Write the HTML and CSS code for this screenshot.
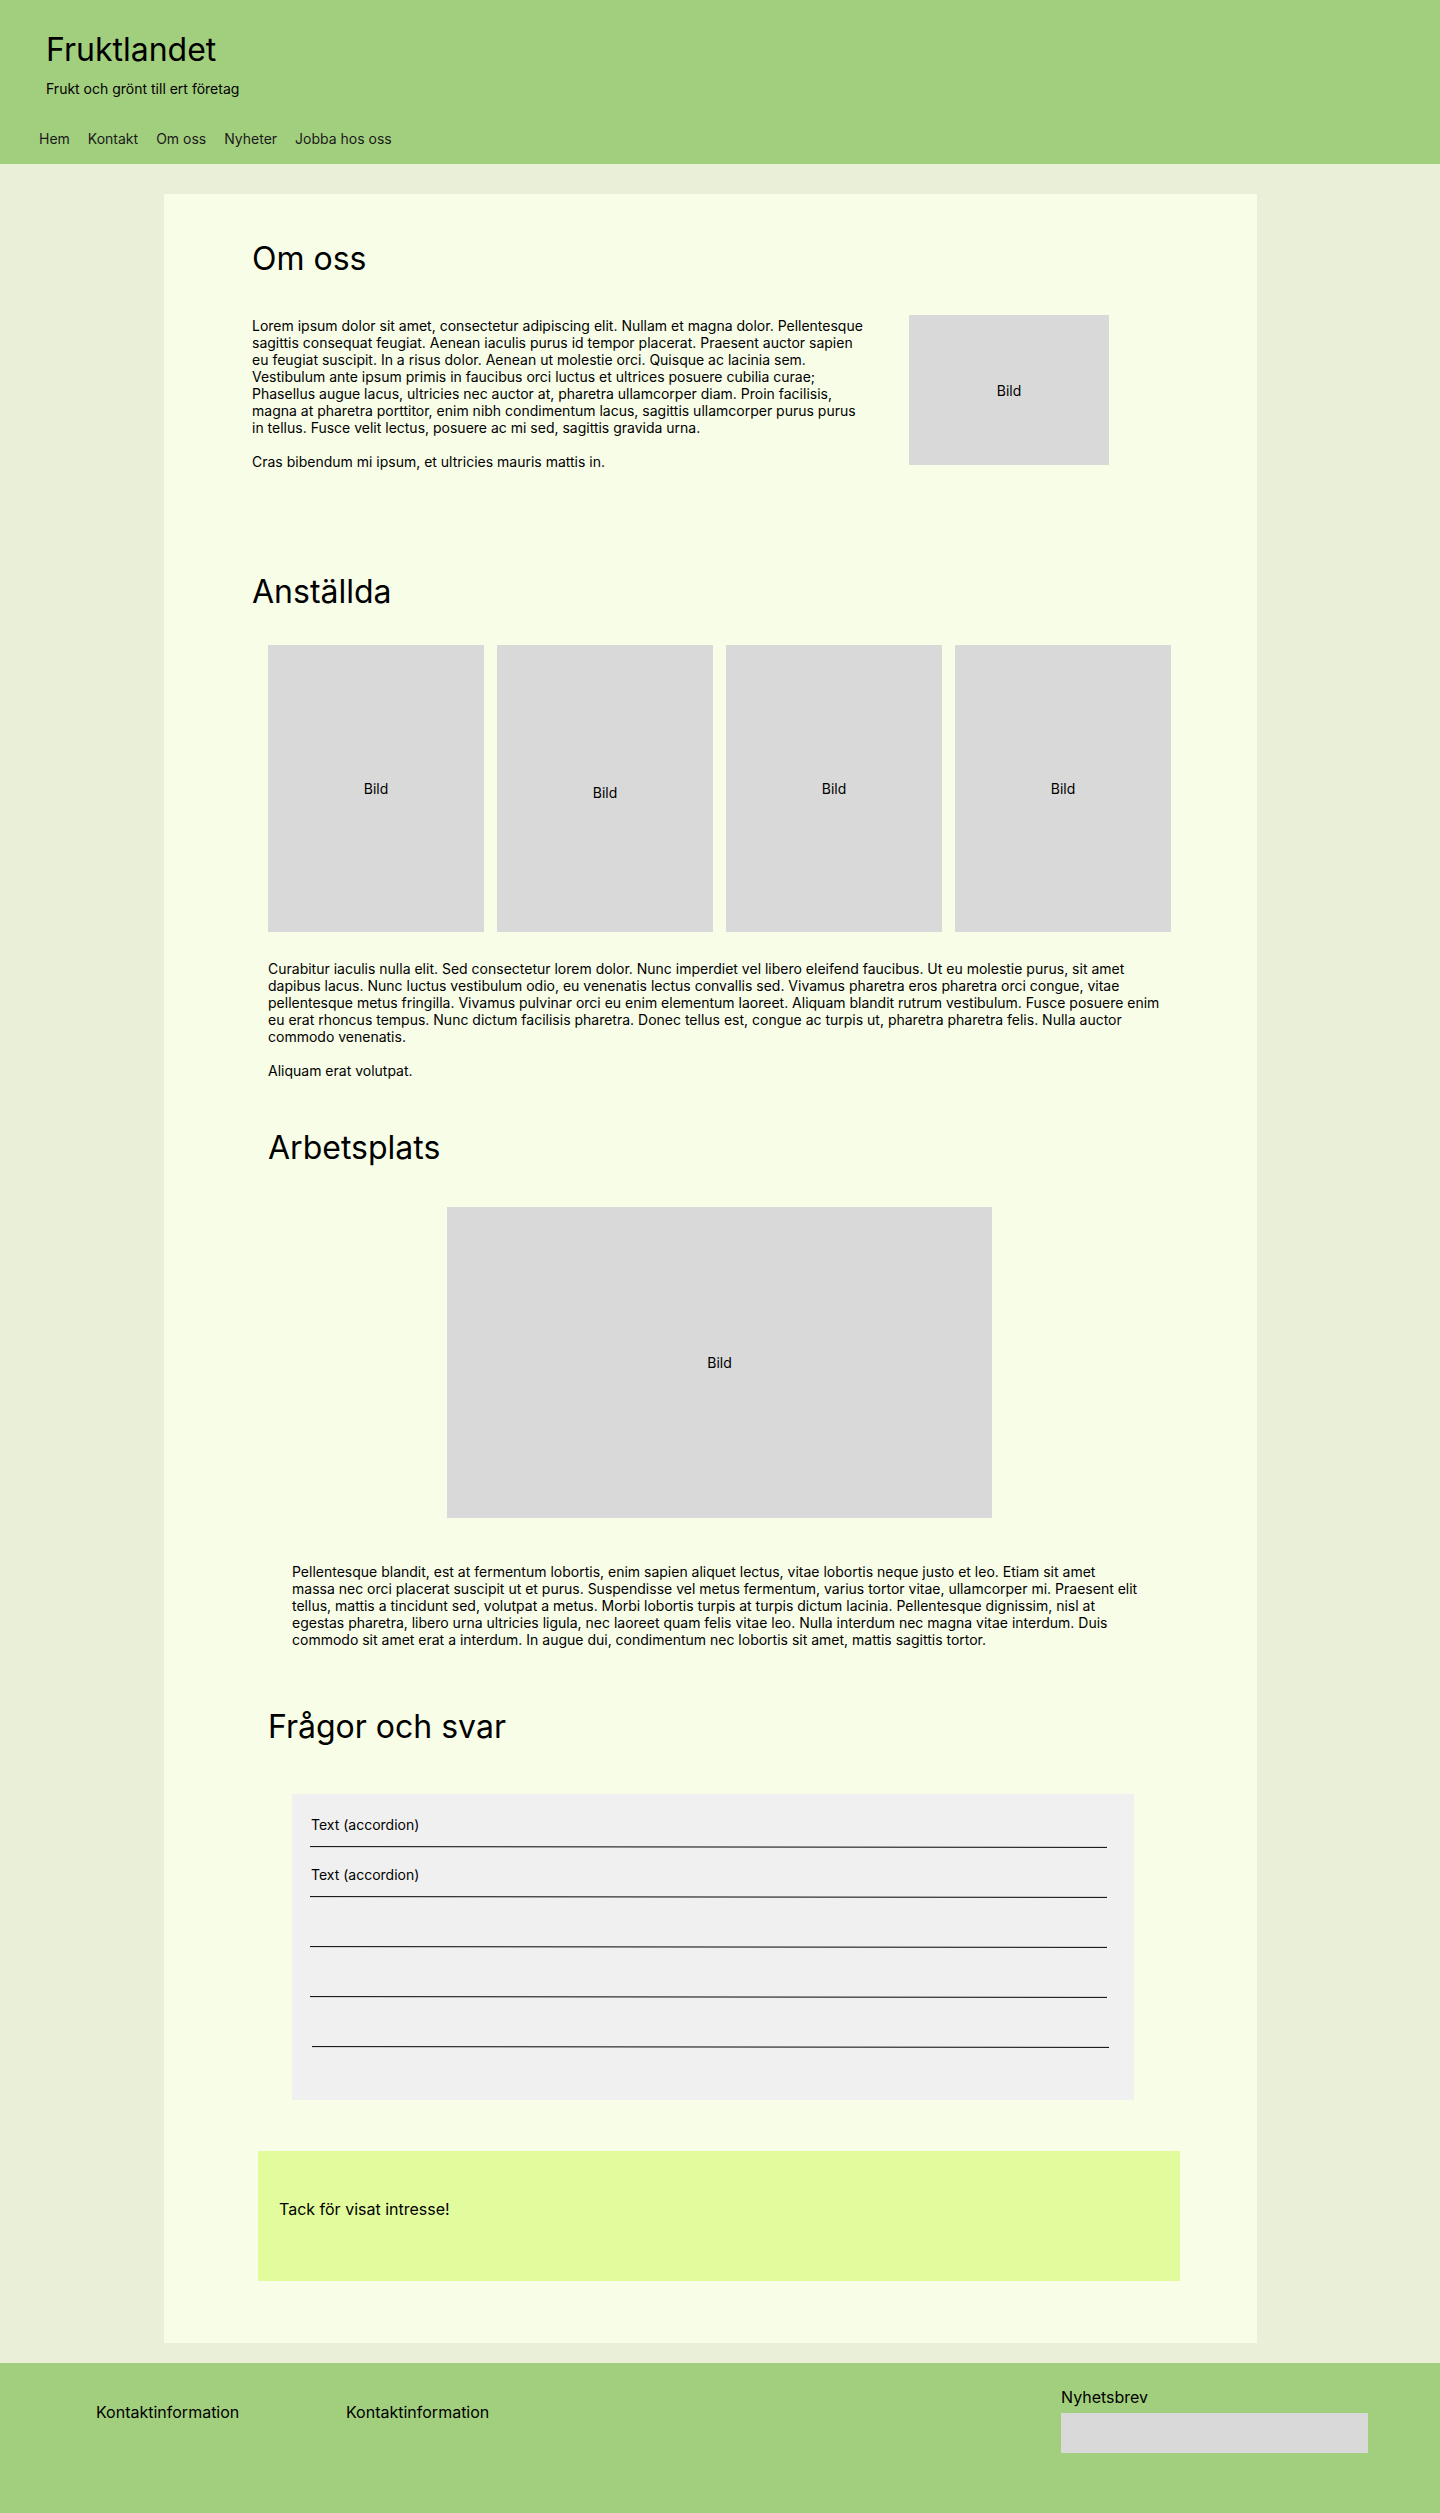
FILE: index.html
```html
<!DOCTYPE html>
<html lang="sv">
<head>
<meta charset="utf-8">
<title>Fruktlandet</title>
<link rel="stylesheet" href="styles.css">
</head>
<body>
<header class="site-header">
  <h1 class="brand">Fruktlandet</h1>
  <p class="tagline">Frukt och grönt till ert företag</p>
  <nav class="main-nav">
    <a href="#">Hem</a>
    <a href="#">Kontakt</a>
    <a href="#">Om oss</a>
    <a href="#">Nyheter</a>
    <a href="#">Jobba hos oss</a>
  </nav>
</header>

<main class="page">
  <section class="about">
    <h2 class="section-title">Om oss</h2>
    <div class="about-row">
      <div class="about-text">
        <p>Lorem ipsum dolor sit amet, consectetur adipiscing elit. Nullam et magna dolor. Pellentesque sagittis consequat feugiat. Aenean iaculis purus id tempor placerat. Praesent auctor sapien eu feugiat suscipit. In a risus dolor. Aenean ut molestie orci. Quisque ac lacinia sem. Vestibulum ante ipsum primis in faucibus orci luctus et ultrices posuere cubilia curae; Phasellus augue lacus, ultricies nec auctor at, pharetra ullamcorper diam. Proin facilisis, magna at pharetra porttitor, enim nibh condimentum lacus, sagittis ullamcorper purus purus in tellus. Fusce velit lectus, posuere ac mi sed, sagittis gravida urna.</p>
        <p class="gap">Cras bibendum mi ipsum, et ultricies mauris mattis in.</p>
      </div>
      <div class="placeholder about-img">Bild</div>
    </div>
  </section>

  <section class="staff">
    <h2 class="section-title">Anställda</h2>
    <div class="staff-grid">
      <div class="placeholder staff-img">Bild</div>
      <div class="placeholder staff-img low">Bild</div>
      <div class="placeholder staff-img">Bild</div>
      <div class="placeholder staff-img">Bild</div>
    </div>
    <div class="staff-text">
      <p>Curabitur iaculis nulla elit. Sed consectetur lorem dolor. Nunc imperdiet vel libero eleifend faucibus. Ut eu molestie purus, sit amet dapibus lacus. Nunc luctus vestibulum odio, eu venenatis lectus convallis sed. Vivamus pharetra eros pharetra orci congue, vitae pellentesque metus fringilla. Vivamus pulvinar orci eu enim elementum laoreet. Aliquam blandit rutrum vestibulum. Fusce posuere enim eu erat rhoncus tempus. Nunc dictum facilisis pharetra. Donec tellus est, congue ac turpis ut, pharetra pharetra felis. Nulla auctor commodo venenatis.</p>
      <p class="gap">Aliquam erat volutpat.</p>
    </div>
  </section>

  <section class="workplace">
    <h2 class="section-title">Arbetsplats</h2>
    <div class="workplace-media">
      <div class="placeholder workplace-img">Bild</div>
    </div>
    <p class="workplace-text">Pellentesque blandit, est at fermentum lobortis, enim sapien aliquet lectus, vitae lobortis neque justo et leo. Etiam sit amet massa nec orci placerat suscipit ut et purus. Suspendisse vel metus fermentum, varius tortor vitae, ullamcorper mi. Praesent elit tellus, mattis a tincidunt sed, volutpat a metus. Morbi lobortis turpis at turpis dictum lacinia. Pellentesque dignissim, nisl at egestas pharetra, libero urna ultricies ligula, nec laoreet quam felis vitae leo. Nulla interdum nec magna vitae interdum. Duis commodo sit amet erat a interdum. In augue dui, condimentum nec lobortis sit amet, mattis sagittis tortor.</p>
  </section>

  <section class="faq">
    <h2 class="section-title">Frågor och svar</h2>
    <div class="accordion">
      <div class="acc-item">
        <div class="acc-label">Text (accordion)</div>
        <svg class="acc-line" width="797" height="2" viewBox="0 0 797 2"><line x1="0" y1="0.6" x2="797" y2="1.4" stroke="#000" stroke-width="1"/></svg>
      </div>
      <div class="acc-item">
        <div class="acc-label">Text (accordion)</div>
        <svg class="acc-line" width="797" height="2" viewBox="0 0 797 2"><line x1="0" y1="0.6" x2="797" y2="1.4" stroke="#000" stroke-width="1"/></svg>
      </div>
      <div class="acc-item">
        <div class="acc-label"></div>
        <svg class="acc-line" width="797" height="2" viewBox="0 0 797 2"><line x1="0" y1="0.6" x2="797" y2="1.4" stroke="#000" stroke-width="1"/></svg>
      </div>
      <div class="acc-item">
        <div class="acc-label"></div>
        <svg class="acc-line" width="797" height="2" viewBox="0 0 797 2"><line x1="0" y1="0.6" x2="797" y2="1.4" stroke="#000" stroke-width="1"/></svg>
      </div>
      <div class="acc-item">
        <div class="acc-label"></div>
        <svg class="acc-line shifted" width="797" height="2" viewBox="0 0 797 2"><line x1="0" y1="0.6" x2="797" y2="1.4" stroke="#000" stroke-width="1"/></svg>
      </div>
    </div>
  </section>

  <section class="thanks">
    <p>Tack för visat intresse!</p>
  </section>
</main>

<footer class="site-footer">
  <div class="footer-col">Kontaktinformation</div>
  <div class="footer-col">Kontaktinformation</div>
  <div class="newsletter">
    <div class="newsletter-title">Nyhetsbrev</div>
    <div class="newsletter-input"></div>
  </div>
</footer>
</body>
</html>
```

FILE: styles.css
```css
* { box-sizing: border-box; }

body {
  margin: 0;
  background: #eaefd7;
  font-family: Inter, "Noto Sans", "Liberation Sans", sans-serif;
  color: #000;
  font-size: 14px;
  line-height: 17px;
}

p { margin: 0; }

.site-header {
  height: 164px;
  background: #a2cf7e;
  padding-top: 30px;
}

.brand {
  margin: 0 0 0 46px;
  font-size: 32px;
  font-weight: 400;
  line-height: 39px;
}

.tagline {
  margin: 11px 0 0 46px;
  font-size: 14px;
  line-height: 17px;
}

.main-nav {
  display: flex;
  gap: 18px;
  margin: 33px 0 0 39px;
}

.main-nav a {
  color: #1a1a1a;
  text-decoration: none;
  font-size: 14px;
  line-height: 17px;
}

.page {
  width: 1093px;
  margin: 30px 0 20px 164px;
  background: #f8fde8;
  padding: 45px 0 62px 0;
}

.section-title {
  margin: 0;
  font-size: 32px;
  font-weight: 400;
  line-height: 39px;
}

.placeholder {
  background: #d9d9d9;
  display: flex;
  align-items: center;
  justify-content: center;
  font-size: 14px;
  line-height: 17px;
}

.gap { margin-top: 17px; }

/* Om oss */
.about { padding-left: 88px; }

.about-row {
  display: flex;
  align-items: flex-start;
  gap: 41px;
  margin-top: 37px;
}

.about-text {
  width: 616px;
  margin-top: 2px;
}

.about-img {
  width: 200px;
  height: 150px;
}

/* Anställda */
.staff {
  margin-top: 102px;
  padding-left: 88px;
}

.staff-grid {
  display: grid;
  grid-template-columns: repeat(4, 216px);
  gap: 13px;
  margin: 34px 0 0 16px;
}

.staff-img { height: 287px; }
.staff-img.low { padding-top: 7px; }

.staff-text {
  width: 903px;
  margin: 28px 0 0 16px;
}

/* Arbetsplats */
.workplace {
  margin-top: 49px;
  padding-left: 104px;
}

.workplace-media {
  width: 903px;
  margin-top: 40px;
  display: flex;
  justify-content: center;
}

.workplace-img {
  width: 545px;
  height: 311px;
}

.workplace-text {
  width: 848px;
  margin: 45px 0 0 24px;
}

/* FAQ */
.faq {
  margin-top: 59px;
  padding-left: 104px;
}

.accordion {
  width: 842px;
  height: 306px;
  margin: 48px 0 0 24px;
  background: #f0f0f0;
  padding: 22px 0 0 18px;
}

.acc-item { margin-bottom: 18px; }

.acc-label {
  height: 17px;
  line-height: 17px;
  font-size: 14px;
  margin: 0 0 13px 1px;
}

.acc-line { display: block; }
.acc-line.shifted { margin-left: 2px; }

/* Thanks */
.thanks {
  width: 922px;
  height: 130px;
  margin: 51px 0 0 94px;
  background: #e2fc9d;
  padding: 49px 0 0 21px;
  font-size: 16px;
  line-height: 19px;
}

/* Footer */
.site-footer {
  height: 150px;
  background: #a2cf7e;
  display: flex;
  align-items: flex-start;
  padding: 0 72px 0 96px;
  font-size: 16px;
  line-height: 19px;
}

.footer-col {
  width: 250px;
  margin-top: 40px;
}

.newsletter {
  margin-left: auto;
  margin-top: 25px;
  width: 307px;
}

.newsletter-input {
  margin-top: 6px;
  height: 40px;
  background: #d9d9d9;
}
```
